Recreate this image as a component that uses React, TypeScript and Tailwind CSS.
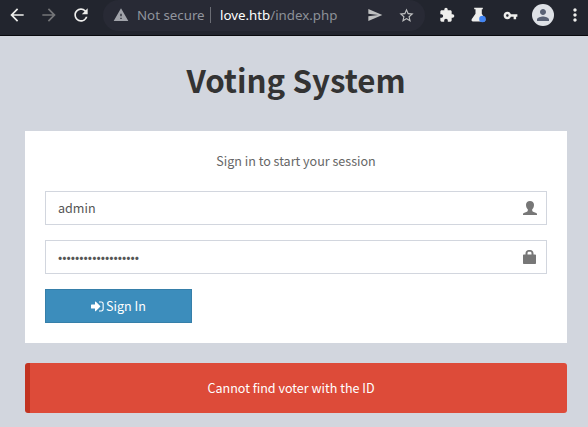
import type { ReactNode } from "react";
import { MdArrowBack, MdArrowForward, MdExtension, MdMoreVert, MdPerson, MdRefresh, MdSend, MdStarBorder, MdVpnKey, MdWarning } from "react-icons/md";

function Field({ children, icon }: { children: ReactNode; icon: ReactNode }) {
  return (
    <div className="flex h-[34px] items-center justify-between border border-[#d2d6de] bg-white pl-3 pr-[9px] text-[#555]">
      {children}
      {icon}
    </div>
  );
}

function UserGlyph() {
  return (
    <svg className="h-[14px] w-[14px]" viewBox="0 0 14 14" fill="#777">
      <path d="M7 0C4.600 0 3 1.500 3 3.800c0 2 .7 3.600 1.800 4.500v1.300c0 .6-.3.9-.9 1.100L.8 12c-.6.300-.8.500-.8 1v1h14v-1c0-.5-.2-.7-.8-1l-3.100-1.300c-.6-.2-.9-.5-.9-1.100V8.300c1.100-.9 1.800-2.500 1.800-4.500C11 1.500 9.400 0 7 0Z" />
    </svg>
  );
}

function LockGlyph() {
  return (
    <svg className="mr-px h-[14px] w-[13px]" viewBox="0 0 13 14" fill="#777">
      <path fillRule="evenodd" d="M2.500 4.500V3.400C2.500 1.300 4 0 5.600 0h1.800c1.600 0 3.100 1.300 3.100 3.400v1.100h1.700c.5 0 .8.300.8.8V13c0 .6-.4 1-1 1H1c-.6 0-1-.4-1-1V5.300c0-.5.3-.8.8-.8Zm2 0h4V3c0-.7-.6-1.300-1.300-1.300H5.800c-.7 0-1.300.6-1.300 1.300Z" />
    </svg>
  );
}

function SignInGlyph() {
  return (
    <svg className="mr-[2px] h-[11px] w-[13px]" viewBox="0 0 13 11" fill="#fff">
      <path d="M.6 3.500H4V1.200c0-.6.5-.8.9-.4l4.300 4.300c.2.200.2.500 0 .7L4.900 10.100c-.4.400-.9.200-.9-.4V7.500H.6c-.3 0-.6-.3-.6-.6V4.100c0-.3.3-.6.6-.6Z" />
      <path d="M8 .5h2.300C11.800.5 12.700 1.400 12.700 2.900v5.200c0 1.500-.9 2.400-2.400 2.400H8V9.500h2.200c.8 0 1.400-.6 1.400-1.400V2.900c0-.8-.6-1.400-1.400-1.400H8Z" />
    </svg>
  );
}

function FlaskGlyph() {
  return (
    <svg className="h-[16px] w-[16px]" viewBox="0 0 16 16">
      <path d="M3.200.8h8.600v1.400h-1v4.600l3.300 5c.8 1.300.2 2.700-1.200 2.700H2c-1.300 0-1.900-1.200-1.200-2.400l3.700-5.300V2.200H3.200Z" fill="#eeeeec" />
      <circle cx="11.500" cy="12" r="3.300" fill="#4285f4" />
    </svg>
  );
}

function Toolbar() {
  return (
    <header className="flex h-9 items-start border-b border-[#090a0e] bg-[#22252e] font-['Noto_Sans',sans-serif] text-[#eeeeec]">
      <div className="flex h-[30px] w-[103px] shrink-0 items-center gap-3 pl-[7px]">
        <MdArrowBack className="size-5 shrink-0" />
        <MdArrowForward className="size-5 shrink-0 text-[#747578]" />
        <MdRefresh className="size-5 shrink-0" />
      </div>
      <div className="flex h-[31px] w-[322px] shrink-0 items-center rounded-full bg-[#282a35] pb-px pl-[10px] text-[13.300px] leading-5">
        <MdWarning className="size-4 shrink-0 text-[#a1a3aa]" />
        <span className="ml-2 w-[66px] whitespace-nowrap text-[#91959e]">Not secure</span>
        <span className="ml-[7px] h-4 w-px bg-[#6b6d75]" />
        <span className="ml-[9px] w-[148px] whitespace-nowrap text-[#8d9198]">
          <span className="text-white">love.htb</span>/index.php
        </span>
        <MdSend className="-ml-px size-4 shrink-0 text-[#bfc0c1]" />
        <MdStarBorder className="ml-[15px] size-[17px] shrink-0 text-[#bfc0c1]" />
      </div>
      <div className="flex h-[30px] items-center">
        <MdExtension className="ml-[14px] size-4 shrink-0" />
        <span className="ml-4"><FlaskGlyph /></span>
        <MdVpnKey className="ml-4 size-[15px] shrink-0" />
        <span className="ml-[14px] flex size-[22px] items-center justify-center rounded-full bg-[#dee1e6]">
          <MdPerson className="size-[18px] text-[#5a6275]" />
        </span>
        <MdMoreVert className="ml-[11px] size-5 shrink-0" />
      </div>
    </header>
  );
}

export default function App() {
  return (
    <div className="h-[427px] w-[588px] overflow-hidden bg-[#d2d6de] font-['Noto_Sans_CJK_JP',sans-serif] text-[12.550px] leading-5">
      <Toolbar />
      <main className="pl-[25px] pr-[21px]">
        <h1 className="h-[95px] pt-[19px] text-center text-[31.300px] font-bold leading-[50px] text-[#333]">Voting System</h1>
        <form className="h-[212px] bg-white px-5 pt-5">
          <p className="mb-5 text-center text-[#666]">Sign in to start your session</p>
          <div className="flex flex-col gap-[15px]">
            <Field icon={<UserGlyph />}>admin</Field>
            <Field icon={<LockGlyph />}>•••••••••••••••••••</Field>
            <button type="button" className="flex h-[34px] w-[147px] items-center justify-center border border-[#367fa9] bg-[#3c8dbc] text-white">
              <SignInGlyph />
              Sign In
            </button>
          </div>
        </form>
        <div className="mt-5 flex h-[50px] items-center justify-center rounded-[3px] border-l-[5px] border-[#c23321] bg-[#dd4b39] pr-[15px] text-white">
          Cannot find voter with the ID
        </div>
      </main>
    </div>
  );
}
